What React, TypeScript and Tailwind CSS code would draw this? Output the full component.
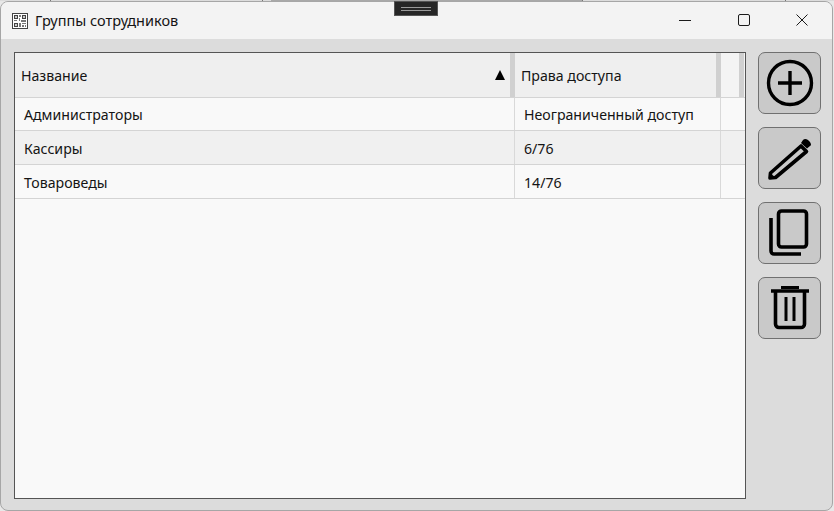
const rows = [
  { name: "Администраторы", rights: "Неограниченный доступ", bg: "bg-[#f9f9f9]", h: "h-[33px]", pad: "pt-[2px]" },
  { name: "Кассиры", rights: "6/76", bg: "bg-[#f0f0f0]", h: "h-[34px]", pad: "pt-[3px]" },
  { name: "Товароведы", rights: "14/76", bg: "bg-[#f9f9f9]", h: "h-[34px]", pad: "pt-[3px]" },
];

const ToolButton = ({ children }: { children: React.ReactNode }) => (
  <button className="w-[63px] h-[62px] rounded-[7px] border border-[#707070] bg-[#c9c9c9] flex items-center justify-center">
    {children}
  </button>
);

const QrIcon = () => (
  <svg width="16" height="16" viewBox="0 0 16 16" shapeRendering="crispEdges">
    <rect x="0.5" y="0.5" width="15" height="15" fill="#fff" stroke="#444" />
    <path d="M2 2h4v4H2zM10 2h4v4h-4zM2 10h4v4H2z" fill="#444" />
    <path d="M3 3h2v2H3zM11 3h2v2h-2zM3 11h2v2H3z" fill="#ccc" />
    <path d="M7 2h2v2H7zM7 5h1v3H7zM2 7h3v1H2zM9 7h5v2H9zM7 10h2v4H7zM10 10h4v1h-4zM10 12h2v2h-2zM13 12h1v2h-1z" fill="#777" />
  </svg>
);

export default function App() {
  return (
    <div className="relative w-[834px] h-[511px] overflow-hidden bg-[#e8e8e8] font-['Noto_Sans','Liberation_Sans',sans-serif] text-[14.15px] text-[#141414]">
      {/* what shows of the windows behind, one pixel high */}
      <div className="h-px flex bg-[#dcdcdc]">
        <div className="w-[50px]" />
        <div className="w-px bg-[#777]" />
        <div className="w-[211px]" />
        <div className="w-px bg-[#777]" />
        <div className="w-[8px]" />
        <div className="w-[311px] bg-[#a8a8a8]" />
        <div className="w-px bg-[#777]" />
        <div className="w-[202px]" />
        <div className="w-px bg-[#777]" />
      </div>

      {/* snap handle over the title bar */}
      <div className="absolute left-[394px] top-[1px] z-10 w-[44px] h-[15px] bg-[#262626] border border-[#555] flex flex-col items-center justify-center gap-[2px]">
        <div className="w-[30px] h-px bg-[#9a9a9a]" />
        <div className="w-[30px] h-px bg-[#9a9a9a]" />
      </div>

      <div className="w-[833px] h-[510px] rounded-[8px] border border-[#a6a6a6] bg-[#dcdcdc] overflow-hidden flex flex-col">
        {/* title bar */}
        <div className="h-[37px] shrink-0 bg-[#f3f3f3] flex items-center pl-[11px]">
          <QrIcon />
          <span className="ml-[7px] text-[14.5px] leading-none">Группы сотрудников</span>
          <div className="ml-auto flex items-center pr-[1px] pb-px">
            <div className="w-[59px] flex justify-center">
              <div className="w-[12px] h-px bg-[#1a1a1a]" />
            </div>
            <div className="w-[59px] flex justify-center">
              <div className="w-[12px] h-[12px] rounded-[2px] border border-[#1a1a1a]" />
            </div>
            <div className="w-[58px] flex justify-center">
              <svg width="12" height="12" viewBox="0 0 12 12" fill="none" stroke="#1a1a1a">
                <path d="M0.5 0.5l11 11M11.5 0.5l-11 11" />
              </svg>
            </div>
          </div>
        </div>

        {/* content */}
        <div className="flex-1 flex pl-[13px] pt-[13px] pb-[10px] gap-[12px]">
          <div className="w-[732px] h-[447px] border border-[#555] bg-[#f9f9f9] flex flex-col">
            <div className="h-[45px] shrink-0 flex bg-[#efefef] border-b border-[#d4d4d4]">
              <div className="w-[500px] flex items-center justify-between pl-[6px] pr-[5px] border-r-[5px] border-[#d0d0d0]">
                <span className="pt-[2px]">Название</span>
                <span className="w-0 h-0 border-x-[5px] border-x-transparent border-b-[10px] border-b-black" />
              </div>
              <div className="w-[206px] flex items-center pl-[6px] pt-[2px] border-r-[5px] border-[#d0d0d0]">
                Права доступа
              </div>
              <div className="flex-1 bg-[#f4f4f4] pr-px">
                <div className="h-full ml-auto w-[5px] bg-[#d0d0d0]" />
              </div>
            </div>
            {rows.map((r) => (
              <div key={r.name} className={`${r.h} flex border-b border-[#d4d4d4] ${r.bg}`}>
                <div className={`w-[500px] flex items-center pl-[9px] border-r border-[#d9d9d9] ${r.pad}`}>{r.name}</div>
                <div className={`w-[206px] flex items-center pl-[9px] border-r border-[#d9d9d9] ${r.pad}`}>{r.rights}</div>
              </div>
            ))}
          </div>

          <div className="flex flex-col gap-[13px]">
            <ToolButton>
              <svg width="48" height="48" viewBox="0 0 48 48" fill="none" stroke="#000" strokeWidth="3.4">
                <circle cx="24" cy="24" r="21.5" />
                <path d="M24 12v24M12 24h24" />
              </svg>
            </ToolButton>
            <ToolButton>
              <svg width="44" height="44" viewBox="0 0 44 44" fill="none" stroke="#000" strokeWidth="3.6">
                <path d="M2.500 37L33 10l5.500 5.500L7.500 41.500 2 42z" strokeLinejoin="round" />
                <path d="M35 4q2-2 5 0l2 2q2 3 0 4l-3 2.500L33 7z" fill="#000" strokeWidth="0" />
                <path d="M1 36l7 6-7 1z" fill="#000" strokeWidth="0" />
              </svg>
            </ToolButton>
            <ToolButton>
              <svg className="-translate-x-px" width="40" height="48" viewBox="0 0 40 48" fill="none" stroke="#000" strokeWidth="3.6">
                <rect x="9.500" y="2" width="28" height="36" rx="3" />
                <path d="M2 9v33a3 3 0 0 0 3 3h27" />
              </svg>
            </ToolButton>
            <ToolButton>
              <svg width="38" height="44" viewBox="0 0 38 44" fill="none" stroke="#000" strokeWidth="3.6">
                <path d="M0 5h38" strokeWidth="3.6" />
                <path d="M11 3V1h16v2" fill="#000" strokeWidth="2" />
                <path d="M4.500 6v32a3.500 3.500 0 0 0 3.500 3.500h22a3.500 3.500 0 0 0 3.500-3.500V6" />
                <path d="M15 11v24M23 11v24" strokeWidth="3" />
              </svg>
            </ToolButton>
          </div>
        </div>
      </div>
    </div>
  );
}
